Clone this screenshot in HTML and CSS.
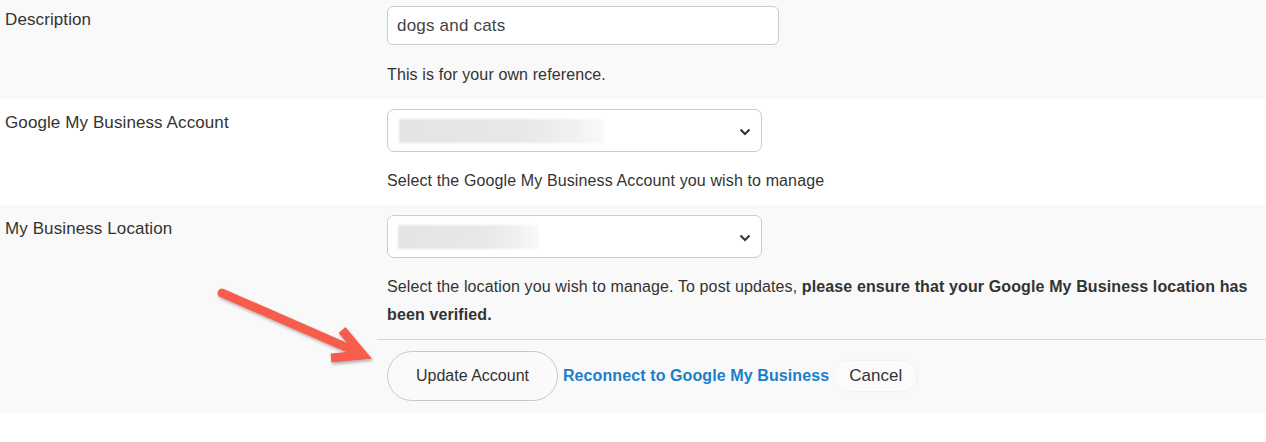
FILE: index.html
```html
<!DOCTYPE html>
<html lang="en">
<head>
    <meta charset="UTF-8">
    <title>Edit Account</title>
    <link rel="stylesheet" href="styles.css">
</head>
<body>
    <div class="form">
        <!-- description -->
        <div class="form-row shaded">
            <div class="label">Description</div>
            <div class="field">
                <input class="text-input" type="text" value="dogs and cats">
                <p class="help">This is for your own reference.</p>
            </div>
        </div>

        <!-- account -->
        <div class="form-row">
            <div class="label">Google My Business Account</div>
            <div class="field">
                <div class="select">
                    <span class="blurred account-blur"></span>
                    <svg class="chevron" width="12" height="8" viewBox="0 0 12 8"><path d="M1.5 1.5 L6 6 L10.5 1.5" fill="none" stroke="#333" stroke-width="2"/></svg>
                </div>
                <p class="help">Select the Google My Business Account you wish to manage</p>
            </div>
        </div>

        <!-- location -->
        <div class="form-row shaded">
            <div class="label">My Business Location</div>
            <div class="field last">
                <div class="select">
                    <span class="blurred location-blur"></span>
                    <svg class="chevron" width="12" height="8" viewBox="0 0 12 8"><path d="M1.5 1.5 L6 6 L10.5 1.5" fill="none" stroke="#333" stroke-width="2"/></svg>
                </div>
                <p class="help">Select the location you wish to manage. To post updates, <strong>please ensure that your Google My Business location has been verified.</strong></p>
                <div class="actions">
                    <button class="btn-primary" type="button">Update Account</button>
                    <a href="#" class="reconnect">Reconnect to Google My Business</a>
                    <button class="btn-cancel" type="button">Cancel</button>
                </div>
            </div>
        </div>
    </div>

    <!-- annotation arrow -->
    <svg class="arrow" width="1266" height="442" viewBox="0 0 1266 442">
        <defs>
            <filter id="shadow" x="-20%" y="-20%" width="140%" height="140%">
                <feDropShadow dx="1" dy="2" stdDeviation="1.5" flood-color="#000" flood-opacity="0.3"/>
            </filter>
        </defs>
        <g filter="url(#shadow)" stroke="#f65d4d" stroke-width="9" fill="none">
            <line x1="222" y1="293" x2="357" y2="352" stroke-linecap="round"/>
            <polyline points="342,330 363,355 331,358"/>
        </g>
    </svg>
</body>
</html>
```

FILE: styles.css
```css
* {
    margin: 0;
    padding: 0;
    box-sizing: border-box;
}

body {
    position: relative;
    background: #fff;
    font-family: "Liberation Sans", Arial, sans-serif;
    color: #333;
    overflow: hidden;
}

.form {
    margin-top: -4px;
}

.form-row {
    display: grid;
    grid-template-columns: 377px 1fr;
}

.shaded {
    background: #f9f9f9;
}

.label {
    padding: 12px 5px 10px;
    font-size: 17px;
    line-height: 24px;
    letter-spacing: 0.1px;
    color: #333;
}

.field {
    padding: 10px 0 10px 10px;
}

.field.last {
    padding-bottom: 0;
}

.text-input {
    display: block;
    width: 392px;
    height: 39px;
    padding: 0 9px;
    border: 1px solid #ccc;
    border-radius: 6px;
    background: #fff;
    font-family: inherit;
    font-size: 17px;
    letter-spacing: 0.2px;
    color: #444;
    outline: none;
}

.help {
    margin-top: 16px;
    padding-right: 10px;
    font-size: 16px;
    line-height: 28px;
    letter-spacing: 0.12px;
    color: #333;
}

.select {
    display: flex;
    align-items: center;
    justify-content: space-between;
    width: 375px;
    height: 43px;
    padding: 0 10px 0 11px;
    border: 1px solid #ccc;
    border-radius: 7px;
    background: #fff;
}

.select + .help {
    margin-top: 15px;
}

.blurred {
    display: block;
    height: 24px;
    background: linear-gradient(90deg, #e4e4e4 0%, #e8e8e8 60%, #f1f1f1 85%, #fafafa 100%);
    filter: blur(1px);
}

.account-blur {
    width: 206px;
}

.location-blur {
    width: 141px;
    margin-left: -1px;
}

.chevron {
    margin-top: 2px;
}

.actions {
    display: flex;
    align-items: center;
    margin: 10px 0 0 -10px;
    padding: 11px 10px 12px;
    border-top: 1px solid #d3d8e0;
}

.btn-primary {
    height: 50px;
    padding: 0 28px;
    border: 1px solid #c8c8c8;
    border-radius: 25px;
    background: #fafafa;
    font-family: inherit;
    font-size: 16px;
    color: #333;
}

.reconnect {
    margin-left: 5px;
    font-size: 16px;
    font-weight: bold;
    letter-spacing: 0.1px;
    color: #1a7fca;
    text-decoration: none;
}

.btn-cancel {
    height: 30px;
    margin-left: 5px;
    padding: 0 15px;
    border: none;
    border-radius: 15px;
    background: #fbfbfb;
    box-shadow: 0 0 3px rgba(0, 0, 0, 0.08);
    font-family: inherit;
    font-size: 17px;
    color: #333;
}

.arrow {
    position: absolute;
    top: 0;
    left: 0;
    pointer-events: none;
}
```
